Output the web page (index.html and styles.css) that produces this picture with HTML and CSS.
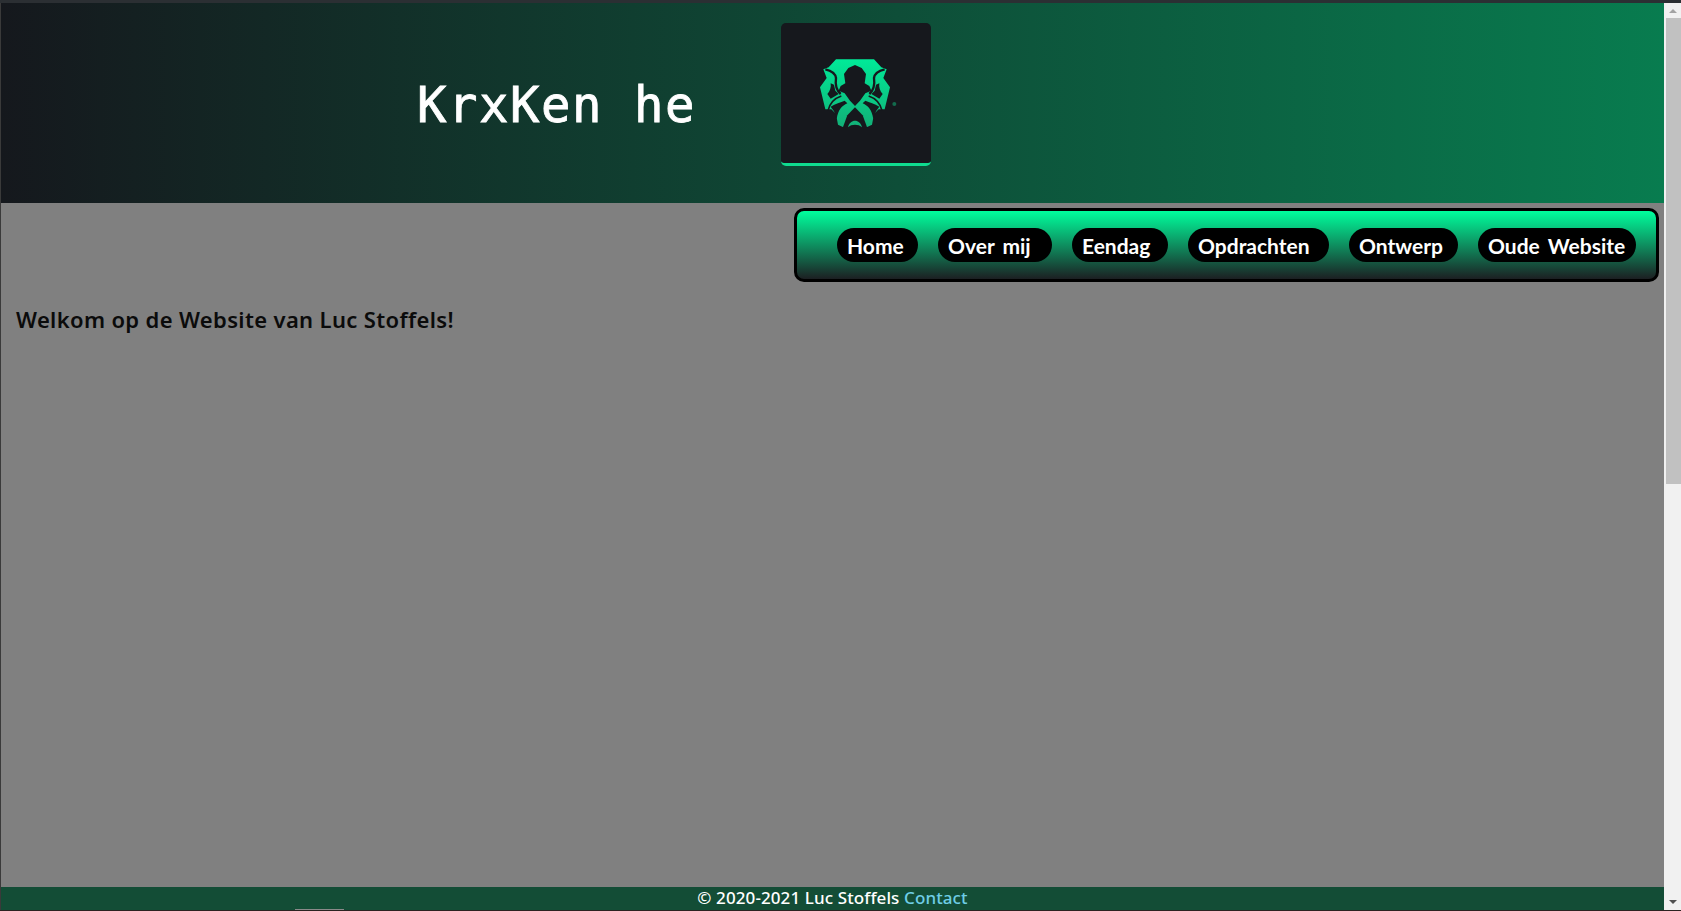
FILE: index.html
```html
<!DOCTYPE html>
<html lang="nl">
<head>
<meta charset="utf-8">
<title>KrxKen he</title>
<link rel="stylesheet" href="styles.css">
</head>
<body>
<div class="frame">
  <div class="page">
    <header class="banner">
      <h1 class="title">KrxKen he</h1>
      <div class="logo">
        <svg class="logo-mark" viewBox="0 0 270 255" aria-hidden="true">
          <defs>
            <linearGradient id="g" gradientUnits="userSpaceOnUse" x1="0" y1="28" x2="0" y2="232">
              <stop offset="0" stop-color="#00ea98"/>
              <stop offset="1" stop-color="#12b077"/>
            </linearGradient>
            <g id="cuts">
              <path class="cut" d="M46 58C64 62 76 70 78 84C76 98 76 118 92 132"/>
              <path class="cut-thin" d="M94 138C76 144 60 156 54 182"/>
              <path fill="#16181d" d="M62 100L72 104L76 122L86 132L62 146L52 132C60 124 64 112 62 100Z"/>
              <path fill="#16181d" d="M62 170C76 160 92 158 104 152L112 160C96 168 84 178 80 208L72 184Z"/>
            </g>
          </defs>
          <path fill="url(#g)" d="M78 28H192L214 52L230 58L220 84L240 112L224 178L206 178L192 192L186 224L170 232H100L84 224L78 192L64 178L46 178L30 112L50 84L40 58L56 52Z"/>
          <use href="#cuts"/>
          <use href="#cuts" transform="translate(270 0) scale(-1 1)"/>
          <path fill="#16181d" d="M135 45L155 54L168 72L164 100L178 108L184 122L166 130L150 152L135 168L120 152L104 130L86 122L92 108L106 100L102 72L115 54Z"/>
          <path fill="#16181d" d="M135 172L158 196L172 234H98L112 196Z"/>
          <path fill="url(#g)" d="M114 232C120 206 150 206 156 232C146 222 124 222 114 232Z"/>
          <circle cx="253" cy="162" r="6" fill="#136b4d"/>
        </svg>
      </div>
    </header>
    <div class="nav-row">
      <nav class="nav">
        <a class="pill pill-home">Home</a>
        <a class="pill pill-about">Over mij</a>
        <a class="pill pill-day">Eendag</a>
        <a class="pill pill-tasks">Opdrachten</a>
        <a class="pill pill-design">Ontwerp</a>
        <a class="pill pill-old">Oude Website</a>
      </nav>
    </div>
    <main class="content">
      <h2 class="welcome">Welkom op de Website van Luc Stoffels!</h2>
    </main>
    <footer class="footer">© 2020-2021 Luc Stoffels <a class="contact">Contact</a></footer>
    <span class="sliver"></span>
  </div>
  <aside class="scrollbar" aria-hidden="true">
    <span class="arrow arrow-up"></span>
    <span class="thumb"></span>
    <span class="arrow arrow-down"></span>
  </aside>
</div>
</body>
</html>
```
FILE: styles.css
```css
* { box-sizing: border-box; }
html, body { margin: 0; height: 100%; overflow: hidden; }
body { background: #808080; }

.frame {
  display: flex;
  height: 100vh;
  border-top: 3px solid #2b2f33;
  border-bottom: 1px solid #2b2220;
}

.page {
  position: relative;
  flex: 1;
  min-width: 0;
  display: flex;
  flex-direction: column;
  border-left: 1px solid #3a3a3a;
  background: #808080;
}

.banner {
  height: 200px;
  flex: none;
  display: flex;
  align-items: flex-start;
  padding: 20px 0 0 416px;
  background: linear-gradient(to right, #15181d 0%, #087c4f 100%);
}

.title {
  margin: 51px 0 0;
  width: 364px;
  font: 400 49px/64px "DejaVu Sans Mono", "Liberation Mono", monospace;
  letter-spacing: 1.5px;
  color: #fff;
  -webkit-text-stroke: 0.8px #fff;
}

.logo {
  width: 150px;
  height: 143px;
  display: flex;
  align-items: flex-start;
  justify-content: center;
  padding-top: 27px;
  padding-right: 2px;
  background: #16181d;
  border-bottom: 3px solid #0fdc8f;
  border-radius: 5px;
}

.logo-mark { width: 90px; height: 85px; display: block; }
.cut { fill: none; stroke: #16181d; stroke-width: 7; }
.cut-thin { fill: none; stroke: #16181d; stroke-width: 5; }

.nav-row {
  flex: none;
  display: flex;
  justify-content: flex-end;
  padding: 5px 5px 0 0;
}

.nav {
  display: flex;
  gap: 20px;
  padding: 17px 20px 17px 40px;
  border: 3px solid #000;
  border-radius: 10px;
  background: linear-gradient(to bottom, #00ff9d 0%, #1c1f22 100%);
}

.pill {
  height: 34px;
  padding-left: 10px;
  border-radius: 17px;
  background: #000;
  color: #fff;
  font: 700 21px/35px "Lato", "Open Sans", sans-serif;
  white-space: nowrap;
}

.pill-home { width: 81px; }
.pill-about { width: 114px; word-spacing: 3px; }
.pill-day { width: 96px; }
.pill-tasks { width: 141px; }
.pill-design { width: 109px; }
.pill-old { width: 158px; word-spacing: 3px; }

.content { flex: 1; padding: 22px 15px 0; }

.welcome {
  margin: 0;
  font: 600 22px/30px "Noto Sans", "Open Sans", sans-serif;
  color: #0b0b0b;
  letter-spacing: 0.35px;
}

.footer {
  flex: none;
  height: 23px;
  text-align: center;
  background: #134d36;
  color: #fff;
  font: 500 17px/21px "Noto Sans", "Open Sans", sans-serif;
  letter-spacing: 0.1px;
}

.contact { color: #6fcde6; }

.sliver {
  position: absolute;
  left: 294px;
  bottom: 0;
  width: 49px;
  height: 1px;
  background: #8a8a8a;
}

.scrollbar {
  flex: none;
  width: 17px;
  display: flex;
  flex-direction: column;
  align-items: center;
  background: #f1f1f1;
}

.arrow { flex: none; width: 0; height: 0; border-left: 4px solid transparent; border-right: 4px solid transparent; }
.arrow-up { margin: 6px 0 5px; border-bottom: 4px solid #a3a3a3; }
.arrow-down { margin: auto 0 6px; border-top: 4px solid #505050; }
.thumb { width: 15px; height: 466px; margin-left: 2px; background: #c1c1c1; }
```
